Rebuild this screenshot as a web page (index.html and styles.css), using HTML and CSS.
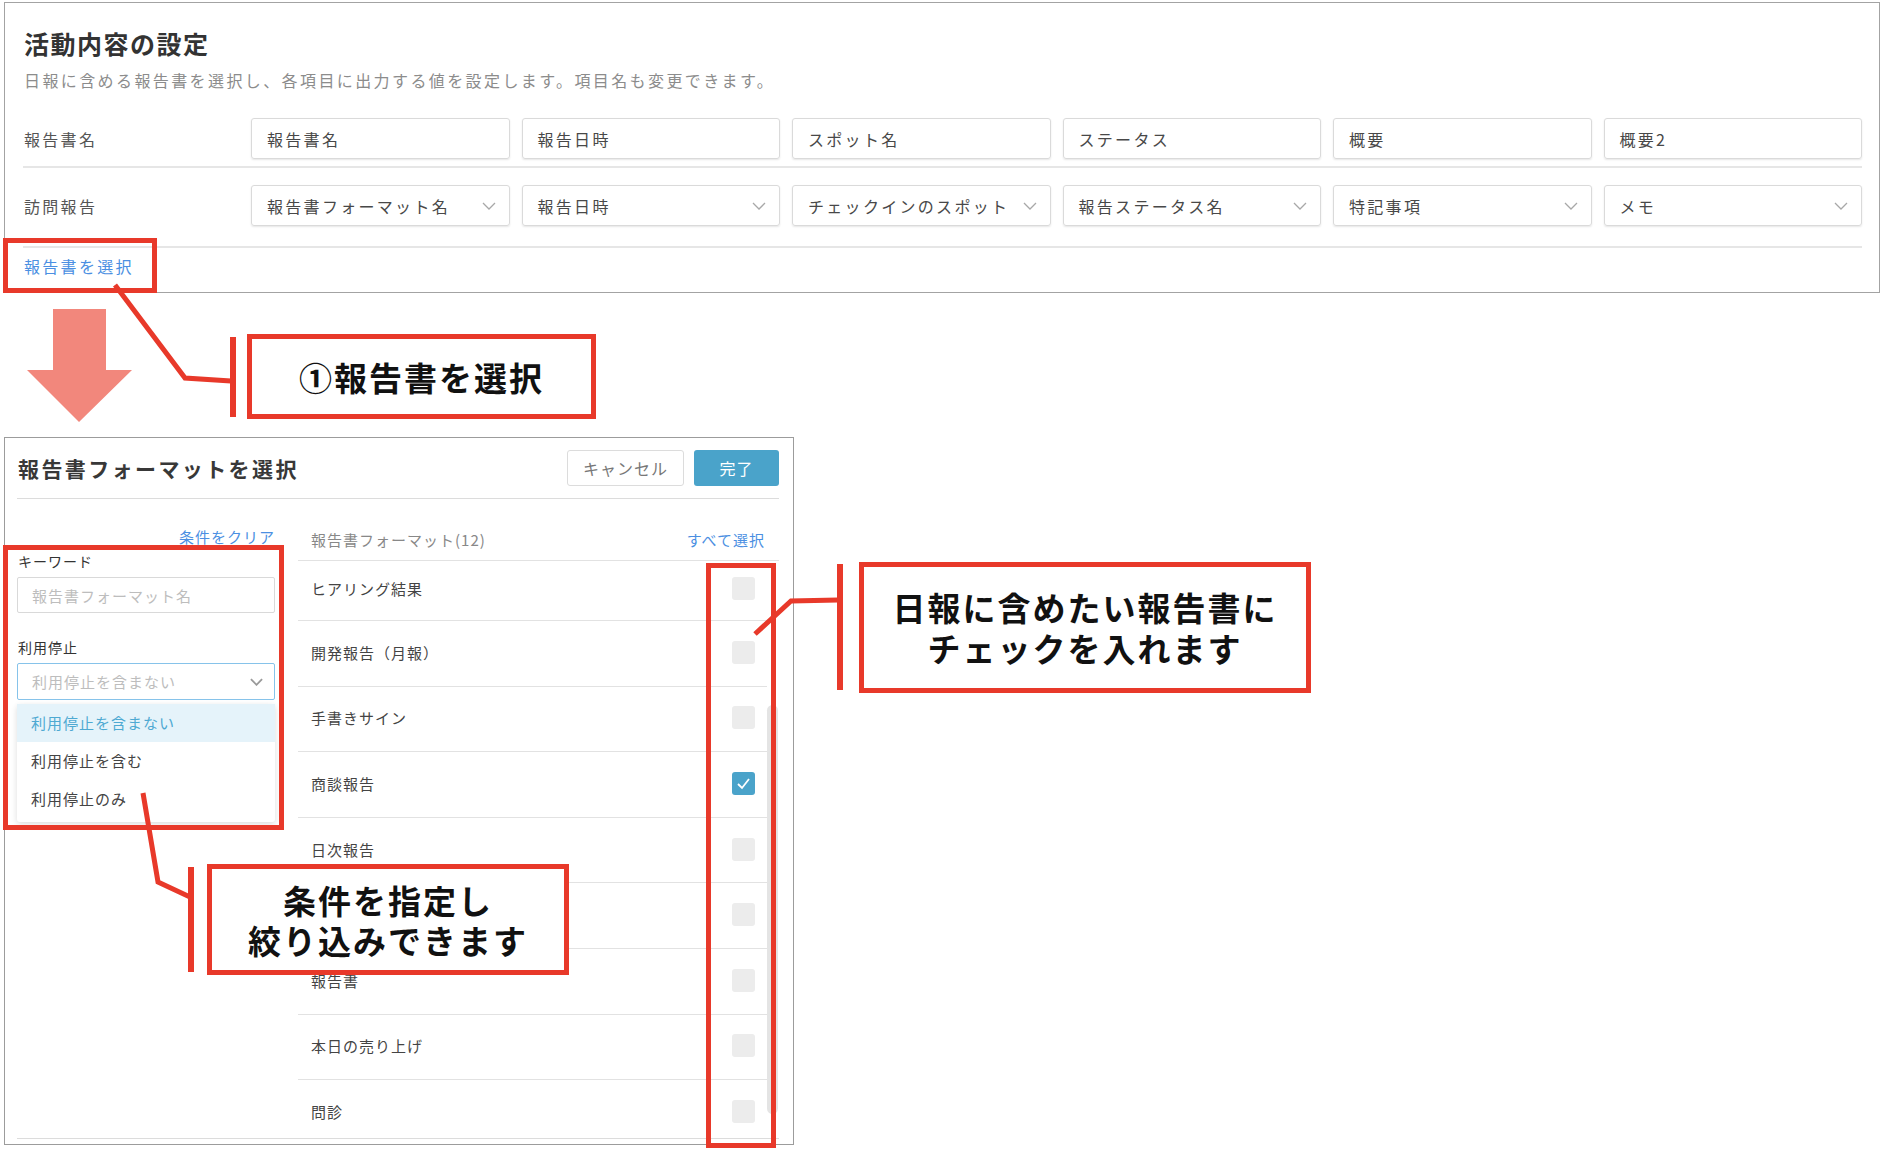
FILE: index.html
```html
<!DOCTYPE html>
<html lang="ja">

<head>
    <meta charset="UTF-8">
    <title>活動内容の設定</title>
    <link rel="stylesheet" href="styles.css">
</head>

<body>

    <section id="settings">
        <h1>活動内容の設定</h1>
        <p class="lead">日報に含める報告書を選択し、各項目に出力する値を設定します。項目名も変更できます。</p>

        <div class="field-row">
            <div class="row-label">報告書名</div>
            <div class="cells">
                <div class="cell">報告書名</div>
                <div class="cell">報告日時</div>
                <div class="cell">スポット名</div>
                <div class="cell">ステータス</div>
                <div class="cell">概要</div>
                <div class="cell">概要2</div>
            </div>
        </div>

        <div class="field-row">
            <div class="row-label">訪問報告</div>
            <div class="cells">
                <div class="cell">報告書フォーマット名<svg class="chev" viewBox="0 0 14 8"><polyline points="1,1 7,7 13,1" /></svg></div>
                <div class="cell">報告日時<svg class="chev" viewBox="0 0 14 8"><polyline points="1,1 7,7 13,1" /></svg></div>
                <div class="cell">チェックインのスポット<svg class="chev" viewBox="0 0 14 8"><polyline points="1,1 7,7 13,1" /></svg></div>
                <div class="cell">報告ステータス名<svg class="chev" viewBox="0 0 14 8"><polyline points="1,1 7,7 13,1" /></svg></div>
                <div class="cell">特記事項<svg class="chev" viewBox="0 0 14 8"><polyline points="1,1 7,7 13,1" /></svg></div>
                <div class="cell">メモ<svg class="chev" viewBox="0 0 14 8"><polyline points="1,1 7,7 13,1" /></svg></div>
            </div>
        </div>

        <a class="pick-link">報告書を選択</a>
    </section>

    <section id="picker">
        <header>
            <h2>報告書フォーマットを選択</h2>
            <div class="actions">
                <button class="cancel">キャンセル</button>
                <button class="done">完了</button>
            </div>
        </header>

        <div class="picker-body">
            <aside class="filters">
                <a class="clear">条件をクリア</a>
                <div class="f-label">キーワード</div>
                <div class="input">報告書フォーマット名</div>
                <div class="f-label gap">利用停止</div>
                <div class="select">利用停止を含まない<svg class="chev" viewBox="0 0 14 8"><polyline points="1,1 7,7 13,1" /></svg></div>
                <ul class="options">
                    <li class="active">利用停止を含まない</li>
                    <li>利用停止を含む</li>
                    <li>利用停止のみ</li>
                </ul>
            </aside>

            <div class="formats">
                <div class="formats-head">
                    <span>報告書フォーマット(12)</span>
                    <a>すべて選択</a>
                </div>
                <div class="list-wrap">
                    <ul class="list">
                        <li><span>ヒアリング結果</span><i class="box"></i></li>
                        <li><span>開発報告（月報）</span><i class="box"></i></li>
                        <li><span>手書きサイン</span><i class="box"></i></li>
                        <li><span>商談報告</span><i class="box checked"><svg viewBox="0 0 23 23"><polyline points="6,12 10,16 17,7" /></svg></i></li>
                        <li><span>日次報告</span><i class="box"></i></li>
                        <li><span></span><i class="box"></i></li>
                        <li><span>報告書</span><i class="box"></i></li>
                        <li><span>本日の売り上げ</span><i class="box"></i></li>
                        <li><span>問診</span><i class="box"></i></li>
                    </ul>
                    <div class="track"><div class="thumb"></div></div>
                </div>
            </div>
        </div>
        <div class="picker-foot"></div>
    </section>

    <!-- annotations -->
    <div class="mark mark-link"></div>
    <div class="mark mark-filters"></div>
    <div class="mark mark-checks"></div>

    <svg class="annot" viewBox="0 0 1884 1150">
        <polygon class="arrow" points="53,309 106,309 106,370 132,370 79,422 27,370 53,370" />
        <polyline points="115,285 185,378 231,381" />
        <polyline points="838,600 791,601 755,634" />
        <polyline points="143,793 158,882 190,897" />
    </svg>

    <span class="bar bar1"></span>
    <div class="callout c1">①報告書を選択</div>

    <span class="bar bar2"></span>
    <div class="callout c2">日報に含めたい報告書に<br>チェックを入れます</div>

    <span class="bar bar3"></span>
    <div class="callout c3">条件を指定し<br>絞り込みできます</div>

</body>

</html>
```

FILE: styles.css
```css
* {
    box-sizing: border-box;
}

body {
    margin: 0;
    width: 1884px;
    height: 1150px;
    position: relative;
    overflow: hidden;
    background-color: #fff;
    font-family: "Noto Sans CJK JP", "Noto Sans", sans-serif;
    color: #444;
}

ul {
    margin: 0;
    padding: 0;
    list-style: none;
}

/* top panel */

#settings {
    margin: 2px 0 0 4px;
    width: 1876px;
    height: 291px;
    border: 1px solid #a3a3a3;
    padding: 25px 17px 0 18px;
}

h1 {
    margin: 0 0 0 1px;
    font-size: 25px;
    line-height: 30px;
    letter-spacing: 1.5px;
    font-weight: 700;
    color: #333;
}

.lead {
    margin: 10px 0 0 1px;
    font-size: 16px;
    line-height: 24px;
    letter-spacing: 2.4px;
    color: #8c8c8c;
}

.field-row {
    display: flex;
    align-items: center;
    padding: 26px 0 7px;
    border-bottom: 2px solid #e6e6e6;
}

.field-row + .field-row {
    padding: 17px 0 20px;
}

.row-label {
    width: 228px;
    padding-left: 1px;
    font-size: 16px;
    letter-spacing: 2.3px;
    color: #555;
}

.cells {
    flex: 1;
    display: grid;
    grid-template-columns: repeat(6, 1fr);
    gap: 12px;
}

.cell {
    height: 41px;
    display: flex;
    align-items: center;
    justify-content: space-between;
    padding: 0 13px 0 15px;
    border: 1px solid #dadada;
    border-radius: 3px;
    box-shadow: 0 1px 2px rgba(0, 0, 0, 0.1);
    font-size: 16px;
    letter-spacing: 2.3px;
    color: #484848;
}

.chev {
    width: 14px;
    height: 8px;
    fill: none;
    stroke: #a8a8a8;
    stroke-width: 1.3;
}

.pick-link {
    display: block;
    margin: 6px 0 0 1px;
    font-size: 16px;
    line-height: 24px;
    letter-spacing: 2.3px;
    color: #4b8fe2;
}

/* dialog */

#picker {
    margin: 144px 0 0 4px;
    width: 790px;
    height: 708px;
    border: 1px solid #9c9c9c;
}

#picker header {
    height: 61px;
    margin: 0 14px 0 12px;
    display: flex;
    align-items: center;
    justify-content: space-between;
    border-bottom: 1px solid #dcdcdc;
}

h2 {
    margin: 0 0 0 1px;
    font-size: 21px;
    letter-spacing: 2.4px;
    font-weight: 700;
    color: #383838;
}

.actions {
    display: flex;
    gap: 10px;
}

button {
    height: 36px;
    border-radius: 3px;
    font-family: inherit;
    font-size: 16px;
    letter-spacing: 1px;
}

.cancel {
    width: 117px;
    border: 1px solid #dcdcdc;
    background: #fff;
    color: #777;
}

.done {
    width: 85px;
    border: none;
    background: #4aa3ca;
    color: #fff;
}

.picker-body {
    height: 639px;
    margin: 0 14px 0 12px;
    display: grid;
    grid-template-columns: 258px 481px;
    column-gap: 23px;
}

.picker-foot {
    margin: 0 14px 0 12px;
    border-top: 1px solid #dcdcdc;
}

.filters {
    display: flex;
    flex-direction: column;
}

.clear {
    margin-top: 28px;
    text-align: right;
    font-size: 15px;
    line-height: 20px;
    letter-spacing: 1px;
    color: #4b8fe2;
}

.f-label {
    margin-top: 5px;
    padding-left: 1px;
    font-size: 14px;
    line-height: 18px;
    letter-spacing: 1px;
    color: #333;
}

.f-label.gap {
    margin-top: 25px;
}

.input,
.select {
    margin-top: 7px;
    height: 36px;
    display: flex;
    align-items: center;
    justify-content: space-between;
    padding: 0 11px 0 14px;
    border: 1px solid #d9d9d9;
    border-radius: 2px;
    font-size: 15px;
    letter-spacing: 1px;
    color: #bdbdbd;
}

.select {
    height: 37px;
    border-color: #86c3ea;
}

.select .chev {
    width: 13px;
    stroke: #9a9a9a;
    stroke-width: 2;
}

.options {
    margin-top: 4px;
    padding-bottom: 4px;
    border-radius: 3px;
    box-shadow: 0 2px 6px rgba(0, 0, 0, 0.14);
}

.options li {
    height: 38px;
    line-height: 37px;
    padding-left: 14px;
    font-size: 15px;
    letter-spacing: 1px;
    color: #444;
}

.options li.active {
    background: #e5f3fa;
    color: #4ea9d2;
}

.formats-head {
    height: 62px;
    display: flex;
    align-items: flex-end;
    justify-content: space-between;
    padding: 0 14px 10px 13px;
    border-bottom: 1px solid #e2e2e2;
    font-size: 15px;
    line-height: 20px;
    letter-spacing: 1px;
    color: #888;
}

.formats-head a {
    color: #4b8fe2;
}

.list-wrap {
    height: 576px;
    overflow: hidden;
    display: grid;
    grid-template-columns: 1fr 12px;
}

.list li {
    height: 65.6px;
    display: flex;
    align-items: center;
    justify-content: space-between;
    padding: 0 12px 2px 13px;
    border-bottom: 1px solid #e2e2e2;
    font-size: 15px;
    letter-spacing: 1px;
    color: #444;
}

.list li:first-child {
    height: 60px;
    padding-bottom: 4px;
}

.box {
    width: 23px;
    height: 23px;
    border-radius: 3px;
    background: #ececec;
}

.box.checked {
    background: #4aa3ca;
}

.box svg {
    display: block;
    width: 23px;
    height: 23px;
    fill: none;
    stroke: #fff;
    stroke-width: 1.8;
}

.thumb {
    margin-top: 144px;
    width: 11px;
    height: 409px;
    border-radius: 6px;
    background: #e4e4e4;
}

/* annotations */

.mark {
    position: absolute;
    border: 5px solid #e8392a;
}

.mark-link {
    left: 3px;
    top: 238px;
    width: 154px;
    height: 55px;
}

.mark-filters {
    left: 3px;
    top: 545px;
    width: 281px;
    height: 285px;
}

.mark-checks {
    left: 706px;
    top: 563px;
    width: 70px;
    height: 585px;
}

.annot {
    position: absolute;
    left: 0;
    top: 0;
    width: 1884px;
    height: 1150px;
}

.annot polyline {
    fill: none;
    stroke: #e8392a;
    stroke-width: 5;
}

.annot .arrow {
    fill: #f2877c;
}

.bar {
    position: absolute;
    width: 6px;
    background: #e8392a;
}

.bar1 {
    left: 230px;
    top: 337px;
    height: 80px;
}

.bar2 {
    left: 837px;
    top: 564px;
    height: 126px;
}

.bar3 {
    left: 188px;
    top: 867px;
    height: 105px;
}

.callout {
    position: absolute;
    display: flex;
    align-items: center;
    justify-content: center;
    text-align: center;
    background: #fff;
    border: 5px solid #e8392a;
    font-size: 33px;
    font-weight: 700;
    letter-spacing: 2px;
    color: #111;
}

.c1 {
    left: 247px;
    top: 334px;
    width: 349px;
    height: 85px;
}

.c2 {
    left: 859px;
    top: 562px;
    width: 452px;
    height: 131px;
    line-height: 41px;
}

.c3 {
    left: 207px;
    top: 864px;
    width: 362px;
    height: 111px;
    line-height: 40px;
}
```
